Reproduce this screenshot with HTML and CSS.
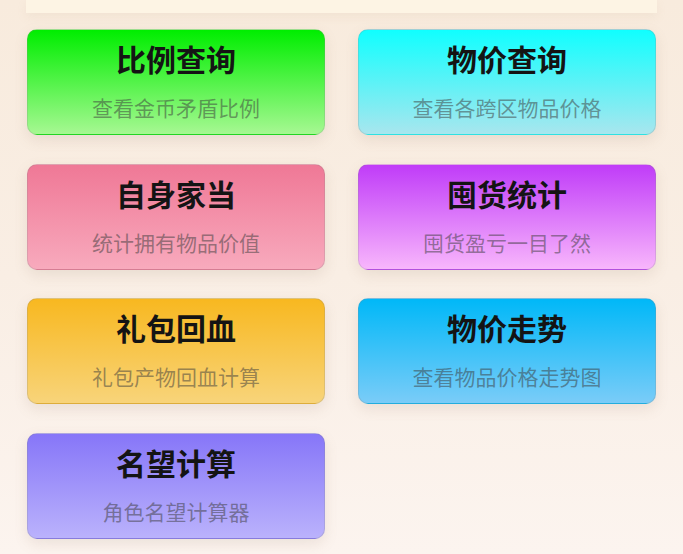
FILE: index.html
```html
<!DOCTYPE html>
<html lang="zh-CN">
<head>
<meta charset="utf-8">
<title>工具</title>
<link rel="stylesheet" href="styles.css">
</head>
<body>
<div class="page">
  <div class="top-panel"></div>
  <div class="grid">
    <div class="card green"><div class="title">比例查询</div><div class="sub">查看金币矛盾比例</div></div>
    <div class="card cyan"><div class="title">物价查询</div><div class="sub">查看各跨区物品价格</div></div>
    <div class="card pink"><div class="title">自身家当</div><div class="sub">统计拥有物品价值</div></div>
    <div class="card purple"><div class="title">囤货统计</div><div class="sub">囤货盈亏一目了然</div></div>
    <div class="card orange"><div class="title">礼包回血</div><div class="sub">礼包产物回血计算</div></div>
    <div class="card blue"><div class="title">物价走势</div><div class="sub">查看物品价格走势图</div></div>
    <div class="card violet"><div class="title">名望计算</div><div class="sub">角色名望计算器</div></div>
  </div>
</div>
</body>
</html>
```
FILE: styles.css
```css
html, body {
  margin: 0;
  padding: 0;
}
body {
  width: 683px;
  height: 554px;
  overflow: hidden;
  background: linear-gradient(180deg, #f8ebdd 0%, #f9eee4 50%, #fcf4ef 100%);
  font-family: "Noto Sans CJK SC", "Noto Sans", sans-serif;
}
.page {
  padding: 0 27px;
}
.top-panel {
  height: 13px;
  background: #fdf4e4;
  margin: 0 -1px 16px -1px;
  box-shadow: 0 4px 10px rgba(200, 170, 140, 0.12);
}
.grid {
  display: grid;
  grid-template-columns: 298px 298px;
  column-gap: 33px;
  row-gap: 28.6px;
}
.card {
  height: 106px;
  box-sizing: border-box;
  border-radius: 10px;
  border: 1px solid rgba(140, 140, 140, 0.25);
  box-shadow: 0 5px 14px rgba(140, 110, 90, 0.14);
  display: flex;
  flex-direction: column;
  align-items: center;
  padding-top: 8px;
}
.title {
  font-size: 30px;
  font-weight: 700;
  line-height: 40px;
  color: #141414;
}
.sub {
  font-size: 21px;
  line-height: 28px;
  margin-top: 15px;
  color: rgba(60, 60, 60, 0.52);
}
.green  { background: linear-gradient(180deg, #00ee00 0%, #a6f892 100%); }
.cyan   { background: linear-gradient(180deg, #10ffff 0%, #a8e6ee 100%); }
.pink   { background: linear-gradient(180deg, #ef7896 0%, #f8aabd 100%); }
.purple { background: linear-gradient(180deg, #c03cf8 0%, #f8b6fc 100%); }
.orange { background: linear-gradient(180deg, #f8b820 0%, #f8d47a 100%); }
.blue   { background: linear-gradient(180deg, #00b8f8 0%, #7accf8 100%); }
.violet { background: linear-gradient(180deg, #8676f8 0%, #bab2fc 100%); }
```
